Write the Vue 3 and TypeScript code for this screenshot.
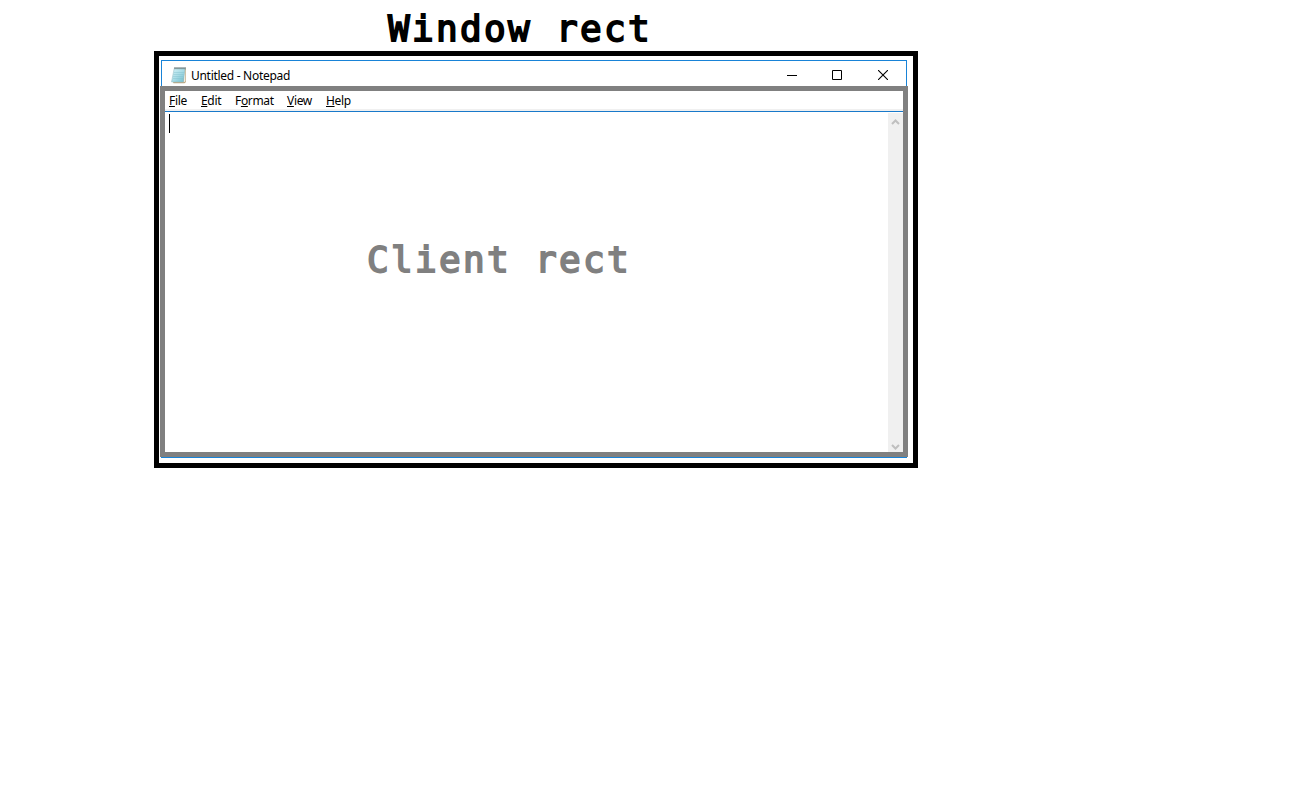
<script setup lang="ts">
interface MenuItem {
  before: string
  key: string
  after: string
  width: number
}

const menu: MenuItem[] = [
  { before: '', key: 'F', after: 'ile', width: 32 },
  { before: '', key: 'E', after: 'dit', width: 34 },
  { before: 'F', key: 'o', after: 'rmat', width: 52 },
  { before: '', key: 'V', after: 'iew', width: 39 },
  { before: '', key: 'H', after: 'elp', width: 40 },
]
const rings = [4, 6, 8, 10, 12, 14]
</script>

<template>
  <main class="page">
    <h1 class="label window-label">Window rect</h1>
    <section class="window-rect">
      <div class="window">
        <header class="titlebar">
          <svg class="app-icon" width="16" height="17" viewBox="0 0 16 17">
            <defs>
              <linearGradient id="paper" x1="0" y1="0" x2="1" y2="1">
                <stop offset="0" stop-color="#d8f4f8" />
                <stop offset="0.5" stop-color="#a9dce6" />
                <stop offset="1" stop-color="#6dbccd" />
              </linearGradient>
            </defs>
            <path d="M4 1.5H15V15L13.5 16.2H2.5L2 15Z" fill="#bca781" />
            <path d="M13.5 2.5H14.4V14.5L12.5 15.2Z" fill="#f1eee5" />
            <path d="M3.2 1.5H14L12.3 15H0.5Z" fill="url(#paper)" stroke="#8eb8c2" stroke-width=".5" />
            <path d="M3 5.5H13M2.5 7.5H12.7M2.2 9.5H12.4M2 11.5H12.2" stroke="#7fbecb" stroke-width=".4" />
            <path v-for="x in rings" :key="x" :d="`M${x} 0V2.2`" stroke="#4b5d63" stroke-width=".9" />
          </svg>
          <span class="title">Untitled - Notepad</span>
          <div class="controls">
            <svg width="10" height="10" viewBox="0 0 10 10"><path d="M0 5.5H10" stroke="#000" /></svg>
            <svg width="10" height="10" viewBox="0 0 10 10"><path d="M.5 .5H9.5V9.5H.5Z" fill="none" stroke="#000" /></svg>
            <svg width="10" height="10" viewBox="0 0 10 10"><path d="M0 0L10 10M10 0L0 10" stroke="#000" stroke-width="1.1" /></svg>
          </div>
        </header>
        <div class="client-rect">
          <nav class="menu">
            <span v-for="item in menu" :key="item.key" class="menu-item" :style="{ width: item.width + 'px' }">{{ item.before }}<span class="key">{{ item.key }}</span>{{ item.after }}</span>
          </nav>
          <div class="body">
            <div class="editor">
              <i class="caret"></i>
              <h2 class="label client-label">Client rect</h2>
            </div>
            <div class="scrollbar">
              <svg width="9" height="6" viewBox="0 0 9 6"><path d="M1 5L4.5 1.5L8 5" fill="none" stroke="#bfbfbf" stroke-width="2" /></svg>
              <svg width="9" height="6" viewBox="0 0 9 6"><path d="M1 1L4.5 4.5L8 1" fill="none" stroke="#bfbfbf" stroke-width="2" /></svg>
            </div>
          </div>
        </div>
      </div>
    </section>
  </main>
</template>

<style>
body {
  margin: 0;
  background: #fff;
}
</style>

<style scoped>
.page {
  width: 1292px;
  height: 786px;
  overflow: hidden;
  background: #fff;
  font-family: "Noto Sans", "Open Sans", sans-serif;
}
.label {
  margin: 0;
  font: normal 36px/51px "DejaVu Sans Mono", monospace;
  letter-spacing: 2.33px;
  -webkit-text-stroke: 1.8px currentColor;
  white-space: pre;
}
.window-label {
  height: 51px;
  padding-left: 388px;
  line-height: 57px;
  color: #000;
}
.window-rect {
  box-sizing: border-box;
  width: 764px;
  height: 417px;
  margin-left: 154px;
  padding: 4px 5px 5px 1px;
  border: 5px solid #000;
}
.window {
  display: flex;
  flex-direction: column;
  width: 748px;
}
.titlebar {
  box-sizing: border-box;
  display: flex;
  width: 746px;
  height: 26px;
  margin-left: 1px;
  border: 1px solid #1883d7;
  border-bottom: 0;
}
.app-icon {
  margin: 6px 0 0 9px;
}
.title {
  margin: 6px 0 0 4px;
  font-size: 12px;
  line-height: 17px;
  letter-spacing: -0.29px;
  white-space: nowrap;
}
.controls {
  display: flex;
  gap: 36px;
  margin: 9px 18px 0 auto;
}
.controls svg {
  display: block;
}
.controls svg:first-child {
  margin-right: -1px;
}
.client-rect {
  box-sizing: border-box;
  width: 748px;
  height: 371px;
  border: 5px solid #808080;
  box-shadow: 0 2px 0 -1px #1883d7;
}
.menu {
  box-sizing: border-box;
  display: flex;
  height: 21px;
  padding-left: 4px;
  border-bottom: 1px solid #1979ca;
  box-shadow: inset 0 -2px #f0f0f0;
  font-size: 12px;
  line-height: 20px;
  letter-spacing: -0.33px;
}
.menu-item {
  flex: none;
  white-space: nowrap;
}
.key {
  text-decoration: underline;
  text-underline-offset: 1px;
  text-decoration-thickness: 1px;
  text-decoration-skip-ink: none;
}
.body {
  display: flex;
  height: 340px;
}
.editor {
  flex: 1;
  padding: 2px 0 0 4px;
}
.caret {
  display: block;
  width: 1px;
  height: 19px;
  background: #000;
}
.client-label {
  margin: 101px 0 0 198px;
  color: #808080;
}
.scrollbar {
  box-sizing: border-box;
  display: flex;
  flex-direction: column;
  align-items: center;
  justify-content: space-between;
  width: 15px;
  margin-top: 1px;
  padding: 6px 0 2px;
  background: #f0f0f0;
}
</style>
